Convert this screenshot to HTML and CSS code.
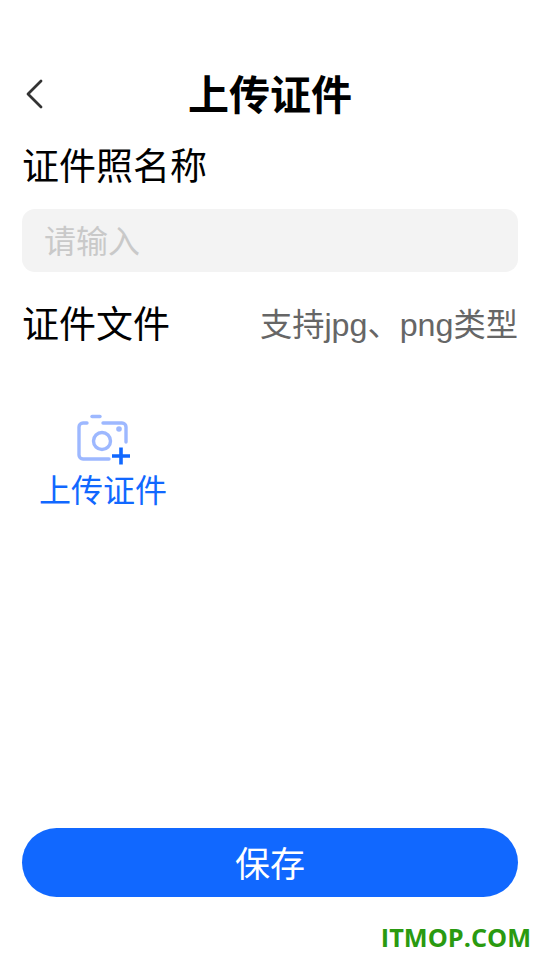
FILE: index.html
```html
<!DOCTYPE html>
<html lang="zh">
<head>
<meta charset="utf-8">
<title>上传证件</title>
<link rel="stylesheet" href="styles.css">
</head>
<body>
<div class="page">
  <header class="nav">
    <svg class="back" width="20" height="30" viewBox="0 0 20 30"><path d="M17 2 L4 15 L17 28" fill="none" stroke="#333" stroke-width="2.800" stroke-linecap="round" stroke-linejoin="round"/></svg>
    <h1 class="title">上传证件</h1>
  </header>
  <div class="label name-label">证件照名称</div>
  <div class="input">请输入</div>
  <div class="file-row">
    <span class="label">证件文件</span>
    <span class="hint">支持jpg、png类型</span>
  </div>
  <div class="upload">
    <svg class="cam" width="56" height="52" viewBox="0 0 56 52">
      <g fill="none" stroke="#9db8ff" stroke-width="3.400" stroke-linecap="round" stroke-linejoin="round">
        <path d="M17 2.500 H25"/>
        <path d="M12 9 H8 a4 4 0 0 0 -4 4 V41 a4 4 0 0 0 4 4 H34"/>
        <path d="M28 9 H47 a4 4 0 0 1 4 4 V28"/>
        <circle cx="27" cy="27" r="8.500"/>
      </g>
      <circle cx="44" cy="15" r="2.800" fill="#9db8ff"/>
      <path d="M37 42 H55 M46 33.500 V50.500" fill="none" stroke="#1168ff" stroke-width="3.600"/>
    </svg>
    <div class="upload-text">上传证件</div>
  </div>
  <div class="spacer"></div>
  <button class="save"><span class="save-text">保存</span></button>
  <div class="mark">ITMOP.COM</div>
</div>
</body>
</html>
```
FILE: styles.css
```css
* { box-sizing: border-box; }
html, body { margin: 0; padding: 0; background: #fff; }
body { font-family: "Noto Sans CJK SC", "Noto Sans", sans-serif; }
.page { width: 540px; height: 960px; display: flex; flex-direction: column; padding: 60px 22px 0; position: relative; }
.nav { height: 64px; display: flex; align-items: center; justify-content: center; position: relative; }
.back { position: absolute; left: 2px; top: 19px; }
.title { margin: 0; font-size: 41px; line-height: 64px; font-weight: 700; color: #000; }
.label { font-size: 37px; line-height: 48px; color: #000; }
.name-label { margin-top: 16px; }
.input { margin-top: 21px; height: 63px; border-radius: 13px; background: #f3f3f3; color: #c9c9c9; font-size: 32px; line-height: 61px; padding-left: 22px; }
.file-row { margin-top: 26px; display: flex; justify-content: space-between; align-items: center; height: 48px; }
.hint { font-size: 32.250px; color: #666; font-family: "Liberation Sans", "Noto Sans CJK SC", sans-serif; }
.upload { margin-top: 68px; margin-left: 18px; width: 126px; display: flex; flex-direction: column; align-items: center; }
.cam { display: block; }
.upload-text { font-size: 32px; line-height: 44px; color: #1168ff; white-space: nowrap; }
.spacer { flex: 1; }
.save { width: 496px; height: 69px; border: 0; border-radius: 35px; background: #1168ff; color: #fff; font: inherit; font-size: 35px; padding: 0 0 3px; }
.mark { height: 63px; text-align: right; margin-right: -13px; font-family: "Open Sans", sans-serif; font-weight: 700; font-size: 25.300px; line-height: 80px; color: #2a9a10; }
```
